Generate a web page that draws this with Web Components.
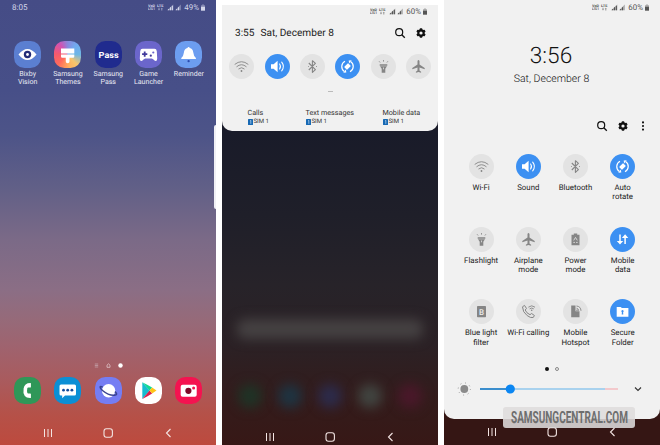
<!DOCTYPE html>
<html lang="en">
<head>
<meta charset="utf-8">
<title>Phone screens</title>
<style>
html,body{margin:0;padding:0;width:660px;height:445px;overflow:hidden;background:#fff;font-family:Roboto,"Open Sans",sans-serif;text-rendering:geometricPrecision}
</style>
</head>
<body>
<screens-board></screens-board>
<script>
const ICONS = {
  wifi:'<g fill="none" stroke="currentColor" stroke-width=".9" stroke-linecap="round"><path d="M6 10.2Q12.5 5 19 10.2M7.8 12.6Q12.5 8.6 17.2 12.6M9.8 14.8Q12.5 12.4 15.2 14.8"/></g><circle cx="12.5" cy="17" r=".9" fill="currentColor"/>',
  sound:'<path fill="currentColor" d="M6 10.2h2.6l4-3.4v11.4l-4-3.4H6z"/><path fill="none" stroke="currentColor" stroke-width="1.1" stroke-linecap="round" d="M14.6 10q1.8 2.5 0 5M16.7 8.2q3.4 4.3 0 8.6"/>',
  bluetooth:'<path fill="none" stroke="currentColor" stroke-width="1.1" stroke-linejoin="round" d="M8.8 9l6.6 6.6-3 2.7V6.7l3 2.7L8.8 16"/><path d="M8 12.5h.7M16.2 12.5h.8" stroke="currentColor"/>',
  rotate:'<g fill="none" stroke="currentColor" stroke-width="1.2"><path d="M10 7.2a6 6 0 0 0-.6 10.3M15 17.8a6 6 0 0 0 .6-10.3"/></g><path fill="currentColor" d="M8.3 18.8l3-.2-.4-3zM16.7 6.2l-3 .2.4 3z"/><rect x="9.7" y="10.5" width="5.6" height="4" rx=".7" fill="currentColor" transform="rotate(-43 12.5 12.5)"/>',
  flash:'<path fill="currentColor" d="M8.700 10.200h7.600v1.500H8.700zM9 12.200h7l-1.700 2.600v3.900h-3.600v-3.900z"/><path fill="none" stroke="currentColor" stroke-width="1" d="M8.2 7.4l.8 1M12.5 6.2v1.3M16.8 7.4l-.8 1"/><rect x="12.100" y="13.500" width=".8" height="1.800" fill="#e5e5e5"/>',
  plane:'<path fill="currentColor" d="M12.5 6c.7 0 1 .8 1 1.6v3l5.2 3.4v1.2l-5.2-1.6v3l1.6 1.2v.9l-2.6-.7-2.6.7v-.9l1.6-1.2v-3l-5.2 1.6V14l5.2-3.4v-3c0-.8.3-1.6 1-1.6z"/>',
  power:'<path fill="currentColor" d="M10.8 6.500h3.400v1.200h2.300v10.600H8.500V7.700h2.300z"/><path fill="none" stroke="#e5e5e5" stroke-width=".8" d="M10.700 13.400l1.800-3 1.800 3M10.300 15.400h1.700M13 15.400h1.700"/>',
  data:'<path fill="none" stroke="currentColor" stroke-width="1.5" d="M10 7.5v8.5M15.1 17V9"/><path fill="currentColor" d="M6.8 14h6.4L10 17.5zM11.9 11h6.4l-3.2-3.7z"/>',
  blue:'<rect x="8" y="7" width="9" height="11.3" rx=".7" fill="currentColor"/><text x="12.5" y="15.6" text-anchor="middle" font-size="8" font-weight="500" fill="#ededed">B</text>',
  call:'<path fill="none" stroke="currentColor" stroke-width="1" stroke-linejoin="round" d="M6.5 7.8l2-1.4 2 3-1.3 1.6q1.2 3.2 4.8 4.7l1.6-1.2 2.8 2-1.2 2q-2.5.8-6-1.9-4.7-3.5-4.7-8.8z"/><path fill="none" stroke="currentColor" stroke-width=".9" d="M12.4 8.2q3.3-2.8 6.6 0M13.6 9.9q2.1-1.7 4.2 0"/><circle cx="15.7" cy="11.3" r=".8" fill="currentColor"/>',
  hotspot:'<path fill="currentColor" d="M8.2 6.5h4.3v5.8h4v6H8.200z"/><path fill="none" stroke="currentColor" stroke-width=".9" d="M13.5 7q4.300.4 4.500 4.800M13.5 9.200q2 .3 2.200 2.600"/><circle cx="14" cy="11.3" r=".8" fill="currentColor"/>',
  folder:'<path fill="currentColor" d="M6.7 7.9h4l1.2 1.2h6.5v8.600H6.700z"/><path fill="#3c90f2" d="M12.5 11a1.200 1.200 0 0 1 .6 2.200l.2 2.200h-1.600l.2-2.200a1.200 1.200 0 0 1 .6-2.200z"/>'
};
const APPS = {
  vision:['#5b7fd1','<path fill="#fff" d="M4.500 13.500Q9 8 13.500 8t9 5.500Q18 19 13.500 19t-9-5.500z"/><circle cx="13.500" cy="13.500" r="3.700" fill="#242d78"/><circle cx="13.500" cy="13.500" r="1.400" fill="#fff"/>'],
  themes:['conic-gradient(from 0deg,#8b86dc,#70aaf0 12%,#6db7e5 25%,#f8c56c 38%,#ffb05e 48%,#ff6a5c 62%,#f4596e 76%,#d052b4 90%,#8b86dc)','<path fill="#fff" d="M7 7.500h13.300v5H7zM7 13.400h13.300v2.100q0 1.300-1.300 1.300h-3.500v3.800q0 1.600-1.850 1.600t-1.850-1.600v-3.800H8.300Q7 16.800 7 15.500z"/>'],
  pass:['#202b8e','<text x="13.600" y="16.500" text-anchor="middle" font-size="8.600" font-weight="700" textLength="20" lengthAdjust="spacingAndGlyphs" fill="#fff">Pass</text>'],
  game:['#6b66cb','<path fill="#fff" d="M7.500 7.800h12q2 0 2.300 2.400l.4 7.200q0 2.600-1.700 2.500-1 0-2-1.300l-1.600-1.200h-6.800l-1.600 1.200q-1 1.300-2 1.300-1.700.1-1.700-2.500l.4-7.200q.3-2.400 2.300-2.400z"/><path stroke="#413a9c" stroke-width="1.800" d="M9.700 10.500v5.200M7.100 13.100h5.200"/><circle cx="18.300" cy="11.500" r="1.100" fill="#6b66cb"/><circle cx="15.800" cy="14.700" r="1.100" fill="#413a9c"/>'],
  reminder:['#6c9df0','<path fill="#fff" d="M13.600 6q1 0 1.100 1 3.200.8 3.600 4.500.3 3.500 2.600 5.500v1H6.300v-1q2.300-2 2.600-5.500.4-3.700 3.600-4.500.1-1 1.100-1z"/><circle cx="13.600" cy="20.200" r="1.150" fill="#2b4aae"/>'],
  phone:['#2f9758','<path fill="#fff" d="M16.400 6q.5 0 .5.600v3.300q0 .7-.7.700h-2q-.7 0-.9.700-.5 2.300 0 4.400.2.700.9.700h2q.7 0 .7.700v3.300q0 .6-.5.600-4 .1-5.600-2-2-3-1.200-7.400.7-5.600 6.800-5.600z"/>'],
  chat:['#0b8fd5','<path fill="#fff" d="M7 7.500h13.500q1.500 0 1.500 1.500v8q0 1.500-1.500 1.500H11l-2.800 2.800v-2.800H7q-1.500 0-1.500-1.500V9Q5.500 7.500 7 7.500z"/><g fill="#124b9b"><circle cx="9.500" cy="13.200" r="1.400"/><circle cx="13.700" cy="13.200" r="1.400"/><circle cx="17.900" cy="13.200" r="1.400"/></g>'],
  web:['#757df3','<circle cx="13.600" cy="13.700" r="6.700" fill="#fff"/><path fill="none" stroke="#3a4391" stroke-width="1.500" d="M7.700 10.100C4 8 4.500 11 7.500 13.500c4 3.300 9.500 5.200 12.800 4.600 2.200-.4 1.200-2-.4-3.500"/>'],
  play:['#fff','<path fill="#16bcd0" d="M7.300 5.300v16.800l7.400-8.600z"/><path fill="#11d994" d="M7.300 5.300q5 2.400 9.800 5.300l-2.600 3z"/><path fill="#dc1f4c" d="M7.300 22.100q5-2.400 9.800-5.600l-2.600-3z"/><path fill="#ffc417" d="M17.100 10.500l4.400 3-4.400 3-2.600-3z"/>'],
  camera:['#f41350','<rect x="5.700" y="7.800" width="16" height="11.900" rx="1.900" fill="#fff"/><circle cx="13.400" cy="13.800" r="3.100" fill="#7d0a28"/><circle cx="18.600" cy="10.900" r="1.500" fill="#f41350"/>']
};
const define = (name, render) => customElements.define(name, class extends HTMLElement {
  connectedCallback() {
    if (this.shadowRoot) return;
    this.attachShadow({mode:'open'}).innerHTML = render(this);
  }
});

define('status-bar', el => `<style>
:host{display:flex;align-items:center;height:13px;padding:0 11px 0 12px;font-size:8px;line-height:13px;color:var(--status,#555)}
.time{flex:1}svg{display:block;margin-right:2px}.pct{font-size:7.900px;margin-right:2px}.bat{margin:0}
</style><span class="time">${el.getAttribute('time')||''}</span>
<svg width="17" height="7" viewBox="0 0 17 7" fill="currentColor" font-size="3.700" font-weight="700"><text x="0" y="3.100" textLength="7" lengthAdjust="spacingAndGlyphs">VoD</text><text x="0" y="6.400" textLength="7" lengthAdjust="spacingAndGlyphs">LTE1</text><text x="9" y="3.100" textLength="6.500" lengthAdjust="spacingAndGlyphs">LTE</text><path d="M10.500 3.800h1v1.500h.6l-1.100 1.100-1.100-1.100h.6zM13.300 6.400h1V4.900h.6l-1.100-1.100-1.100 1.100h.6z" opacity=".6"/></svg>
<svg width="15" height="7" viewBox="0 0 15 7" fill="currentColor"><path d="M0 6.300L6.300.5v5.800z" opacity=".45"/><path d="M1.200 4.900h1v1.400h-1zM3 3.300h1v3H3zM4.900 1.800h1v4.500h-1z"/><path d="M8 6.300L13.800.5v5.800z" opacity=".45"/><path d="M9.200 4.900h1v1.400h-1zM11 3.300h1v3h-1z"/></svg>
<span class="pct">${el.getAttribute('level')}</span>
<svg class="bat" width="4" height="7" viewBox="0 0 4 7" fill="currentColor"><path d="M1 .4h2v.9h1v5.300H0V1.300h1z" opacity=".45"/><path d="M0 2.800h4v3.800H0z"/></svg>`);

define('nav-bar', () => `<style>:host{display:flex;justify-content:space-between;align-items:center;height:12px;padding:0 42px;color:#f3e5e3}svg{display:block}</style>
<svg width="12" height="12" fill="none" stroke="currentColor" stroke-width="1"><path d="M2.500 2v8M6 2v8M9.500 2v8"/></svg>
<svg width="12" height="12" fill="none" stroke="currentColor" stroke-width="1.100"><rect x="2" y="1.800" width="8.400" height="8.400" rx="2.400"/></svg>
<svg width="12" height="12" fill="none" stroke="currentColor" stroke-width="1.100"><path d="M8.500 2l-4 4 4 4"/></svg>`);

define('app-icon', el => { const [bg,svg]=APPS[el.getAttribute('kind')]; return `<style>
:host{display:flex;flex-direction:column;align-items:center;color:#e9eaf4;font-size:7.050px;line-height:8px;text-align:center}
.face{width:27px;height:27px;border-radius:10.500px;background:${bg}}svg{display:block}
.label{margin-top:2.500px;white-space:pre-line}</style>
<div class="face"><svg width="27" height="27" viewBox="0 0 27 27">${svg}</svg></div><div class="label"><slot></slot></div>`});

define('quick-tile', el => { const on=el.hasAttribute('on'); return `<style>
:host{display:flex;flex-direction:column;align-items:center;font-size:7.850px;line-height:9.300px;text-align:center;color:#222}
.disc{width:25px;height:25px;border-radius:50%;background:${on?'#3c90f2':'#e3e3e3'};color:${on?'#fff':'#858585'}}
svg{display:block}.label{margin-top:4px;white-space:pre}</style>
<div class="disc"><svg width="25" height="25" viewBox="0 0 25 25">${ICONS[el.getAttribute('kind')]}</svg></div><div class="label"><slot></slot></div>`});

define('tool-icon', el => { const k=el.getAttribute('kind'); return `<style>:host{display:block;width:12px;height:12px;color:#111}svg{display:block}</style><svg width="12" height="12" viewBox="0 0 12 12">${
 k==='search'?'<circle cx="5.200" cy="5.200" r="3.500" fill="none" stroke="currentColor" stroke-width="1.200"/><path d="M7.800 7.800l3 3" stroke="currentColor" stroke-width="1.300"/>':
 k==='gear'?'<g fill="currentColor"><circle cx="6" cy="6" r="3.700"/><rect x="4.700" y="1.300" width="2.600" height="9.400" rx=".6"/><rect x="4.700" y="1.300" width="2.600" height="9.400" rx=".6" transform="rotate(60 6 6)"/><rect x="4.700" y="1.300" width="2.600" height="9.400" rx=".6" transform="rotate(120 6 6)"/></g><circle cx="6" cy="6" r="1.600" fill="#f1f1f1"/>':
 '<g fill="currentColor"><circle cx="6" cy="2.400" r="1.050"/><circle cx="6" cy="6" r="1.050"/><circle cx="6" cy="9.600" r="1.050"/></g>'}</svg>`});

define('sim-choice', el => `<style>:host{display:block;color:#333;font-size:7.200px;line-height:9px;white-space:nowrap}.s{display:flex;align-items:center;gap:1px;font-size:6.100px}i{width:5px;height:6px;background:#1769b4;border-radius:.5px;display:grid;place-items:center}i svg{display:block}</style>
<div><slot></slot></div><div class="s"><i><svg width="5" height="6"><path d="M2 2l.8-.6v3.400" fill="none" stroke="#c7dcf0" stroke-width=".7"/></svg></i><span>SIM 1</span></div>`);

define('home-screen', () => `<style>
:host{display:flex;flex-direction:column;position:relative;width:216px;height:445px;background:linear-gradient(#454c86 0,#474f88 90px,#4d5488 135px,#626087 190px,#7b6a87 240px,#8b6e85 290px,#966a79 320px,#a0626d 350px,#a95b5e 380px,#b55148 415px,#bd4a3e 445px);--status:#d4d7ea}
status-bar{margin-top:.5px}
.apps{display:grid;grid-template-columns:repeat(5,40.300px);margin-left:7.500px}
.top{margin-top:27px}.spacer{flex:1}
.dots{display:flex;justify-content:center;align-items:center;gap:7px;height:6px;margin-bottom:9px}
.dots svg{display:block}
.dock{height:27px;margin-bottom:22.500px}nav-bar{margin-bottom:6.500px}
.handle{position:absolute;right:0;top:125px;width:2px;height:84px;background:#f0f0f5;border-radius:2px 0 0 2px}
</style><status-bar time="8:05" level="49%"></status-bar>
<div class="apps top"><app-icon kind="vision">Bixby
Vision</app-icon><app-icon kind="themes">Samsung
Themes</app-icon><app-icon kind="pass">Samsung
Pass</app-icon><app-icon kind="game">Game
Launcher</app-icon><app-icon kind="reminder">Reminder</app-icon></div>
<div class="spacer"></div>
<div class="dots"><svg width="5" height="5" stroke="#c9aab1" stroke-width=".7"><path d="M.8 1h3.400M.8 2.500h3.400M.8 4h3.400"/></svg><svg width="5" height="5" fill="none" stroke="#dfc7cc" stroke-width=".8"><path d="M1 4.300V2.200L2.500.8 4 2.200v2.100z"/></svg><svg width="5" height="5"><circle cx="2.500" cy="2.500" r="2.200" fill="#fff"/></svg></div>
<div class="apps dock"><app-icon kind="phone"></app-icon><app-icon kind="chat"></app-icon><app-icon kind="web"></app-icon><app-icon kind="play"></app-icon><app-icon kind="camera"></app-icon></div>
<nav-bar></nav-bar><div class="handle"></div>`);

define('shade-screen', () => `<style>
:host{display:flex;flex-direction:column;width:216px;height:440px;margin-top:5px;background:linear-gradient(#191b29 0,#191b29 126px,#1f1f29 210px,#272329 280px,#2b2125 340px,#331c1c 390px,#371816 440px);overflow:hidden}
.panel{height:126px;background:#f1f1f1;border-radius:0 0 10px 10px;display:flex;flex-direction:column}
.head{display:flex;align-items:center;height:14px;margin-top:8px;padding:0 11px 0 13px;font-size:10.100px;color:#222}
.head span{margin-right:6px}.gap{flex:1}.head tool-icon+tool-icon{margin-left:9px}
.tiles{display:grid;grid-template-columns:repeat(6,35.300px);margin:13.500px 0 0 2.200px;height:25px}
.grip{width:5px;height:1px;background:#bbb;margin:12.500px auto 0}
.sims{display:grid;grid-template-columns:58px 77px 1fr;margin:16px 0 0 25.500px}
.blurbar{height:20px;margin:188px 15px 0;background:#454142;filter:blur(6px);border-radius:8px}
.glow{display:flex;justify-content:space-between;margin:45px 16px 0;height:24px}
.glow b{width:24px;height:24px;border-radius:50%;filter:blur(6px)}
nav-bar{margin-top:auto;margin-bottom:2.500px}
</style>
<div class="panel"><status-bar level="60%"></status-bar>
<div class="head"><span>3:55</span><span>Sat, December 8</span><div class="gap"></div><tool-icon kind="search"></tool-icon><tool-icon kind="gear"></tool-icon></div>
<div class="tiles"><quick-tile kind="wifi"></quick-tile><quick-tile kind="sound" on></quick-tile><quick-tile kind="bluetooth"></quick-tile><quick-tile kind="rotate" on></quick-tile><quick-tile kind="flash"></quick-tile><quick-tile kind="plane"></quick-tile></div>
<div class="grip"></div>
<div class="sims"><sim-choice>Calls</sim-choice><sim-choice>Text messages</sim-choice><sim-choice>Mobile data</sim-choice></div></div>
<div class="blurbar"></div>
<div class="glow"><b style="background:#1f3326"></b><b style="background:#1e3442"></b><b style="background:#2c2b4b"></b><b style="background:#414541"></b><b style="background:#4a182a"></b></div>
<nav-bar></nav-bar>`);

define('settings-screen', () => `<style>
:host{display:flex;flex-direction:column;position:relative;width:216px;height:445px;background:#351614}
.panel{height:419px;background:#f1f1f1;border-radius:0 0 10px 10px;display:flex;flex-direction:column}
status-bar{margin-top:.5px}
.clock{margin-top:29.500px;text-align:center;font-size:22.600px;line-height:26px;font-weight:300;color:#111;padding-right:2px}
.date{text-align:center;font-size:10.500px;line-height:14px;margin-top:2.500px;font-weight:300;color:#111;padding-right:1px}
.tools{display:flex;justify-content:flex-end;gap:8.500px;padding-right:11px;margin-top:34.500px}
.grid{display:grid;grid-template-columns:repeat(4,47.200px);grid-auto-rows:72.700px;margin:22px 0 0 13.500px;height:212.500px}
.dots{display:flex;gap:5.500px;justify-content:center;height:5px}
.dots i{box-sizing:border-box;width:4.400px;height:4.400px;border-radius:50%;background:#111}.dots i+i{background:none;border:1px solid #888}
.bright{display:flex;align-items:center;height:14px;margin:10.500px 0 0 13px}
.bright svg{display:block}
nav-bar{margin-top:7px}
.mark{position:absolute;left:59px;top:406.500px;width:132px;height:21px;border-radius:3px;background:rgba(222,220,220,.88)}
.mark svg{display:block}
</style>
<div class="panel"><status-bar level="60%"></status-bar>
<div class="clock">3:56</div><div class="date">Sat, December 8</div>
<div class="tools"><tool-icon kind="search"></tool-icon><tool-icon kind="gear"></tool-icon><tool-icon kind="more"></tool-icon></div>
<div class="grid"><quick-tile kind="wifi">Wi-Fi</quick-tile><quick-tile kind="sound" on>Sound</quick-tile><quick-tile kind="bluetooth">Bluetooth</quick-tile><quick-tile kind="rotate" on>Auto
rotate</quick-tile><quick-tile kind="flash">Flashlight</quick-tile><quick-tile kind="plane">Airplane
mode</quick-tile><quick-tile kind="power">Power
mode</quick-tile><quick-tile kind="data" on>Mobile
data</quick-tile><quick-tile kind="blue">Blue light
filter</quick-tile><quick-tile kind="call">Wi-Fi calling</quick-tile><quick-tile kind="hotspot">Mobile
Hotspot</quick-tile><quick-tile kind="folder" on>Secure
Folder</quick-tile></div>
<div class="dots"><i></i><i></i></div>
<div class="bright"><svg width="200" height="14" viewBox="0 0 200 14"><circle cx="7.300" cy="7" r="3.900" fill="#8b8b8b"/><circle cx="7.300" cy="7" r="6.100" fill="none" stroke="#999" stroke-width="1" stroke-dasharray="1 3.790"/><path d="M23 7h30" stroke="#2683c9" stroke-width="1.800"/><path d="M53 7h95" stroke="#a9d2ee" stroke-width="1.800"/><path d="M148 7h13" stroke="#f3c5c8" stroke-width="1.800"/><circle cx="53.300" cy="7" r="4.600" fill="#0b86f2"/><path d="M178 5.500l3 3 3-3" fill="none" stroke="#333" stroke-width="1.100"/></svg></div>
</div><nav-bar></nav-bar>
<div class="mark"><svg width="132" height="21"><text transform="translate(8 16.400) scale(.595 1)" font-size="16.800" font-weight="700" fill="#6e6e6e">SAMSUNGCENTRAL.COM</text></svg></div>`);

define('screens-board', () => `<style>:host{display:flex;gap:6px;width:660px;height:445px;overflow:hidden;background:#fff}</style>
<home-screen></home-screen><shade-screen></shade-screen><settings-screen></settings-screen>`);
</script>
</body>
</html>
